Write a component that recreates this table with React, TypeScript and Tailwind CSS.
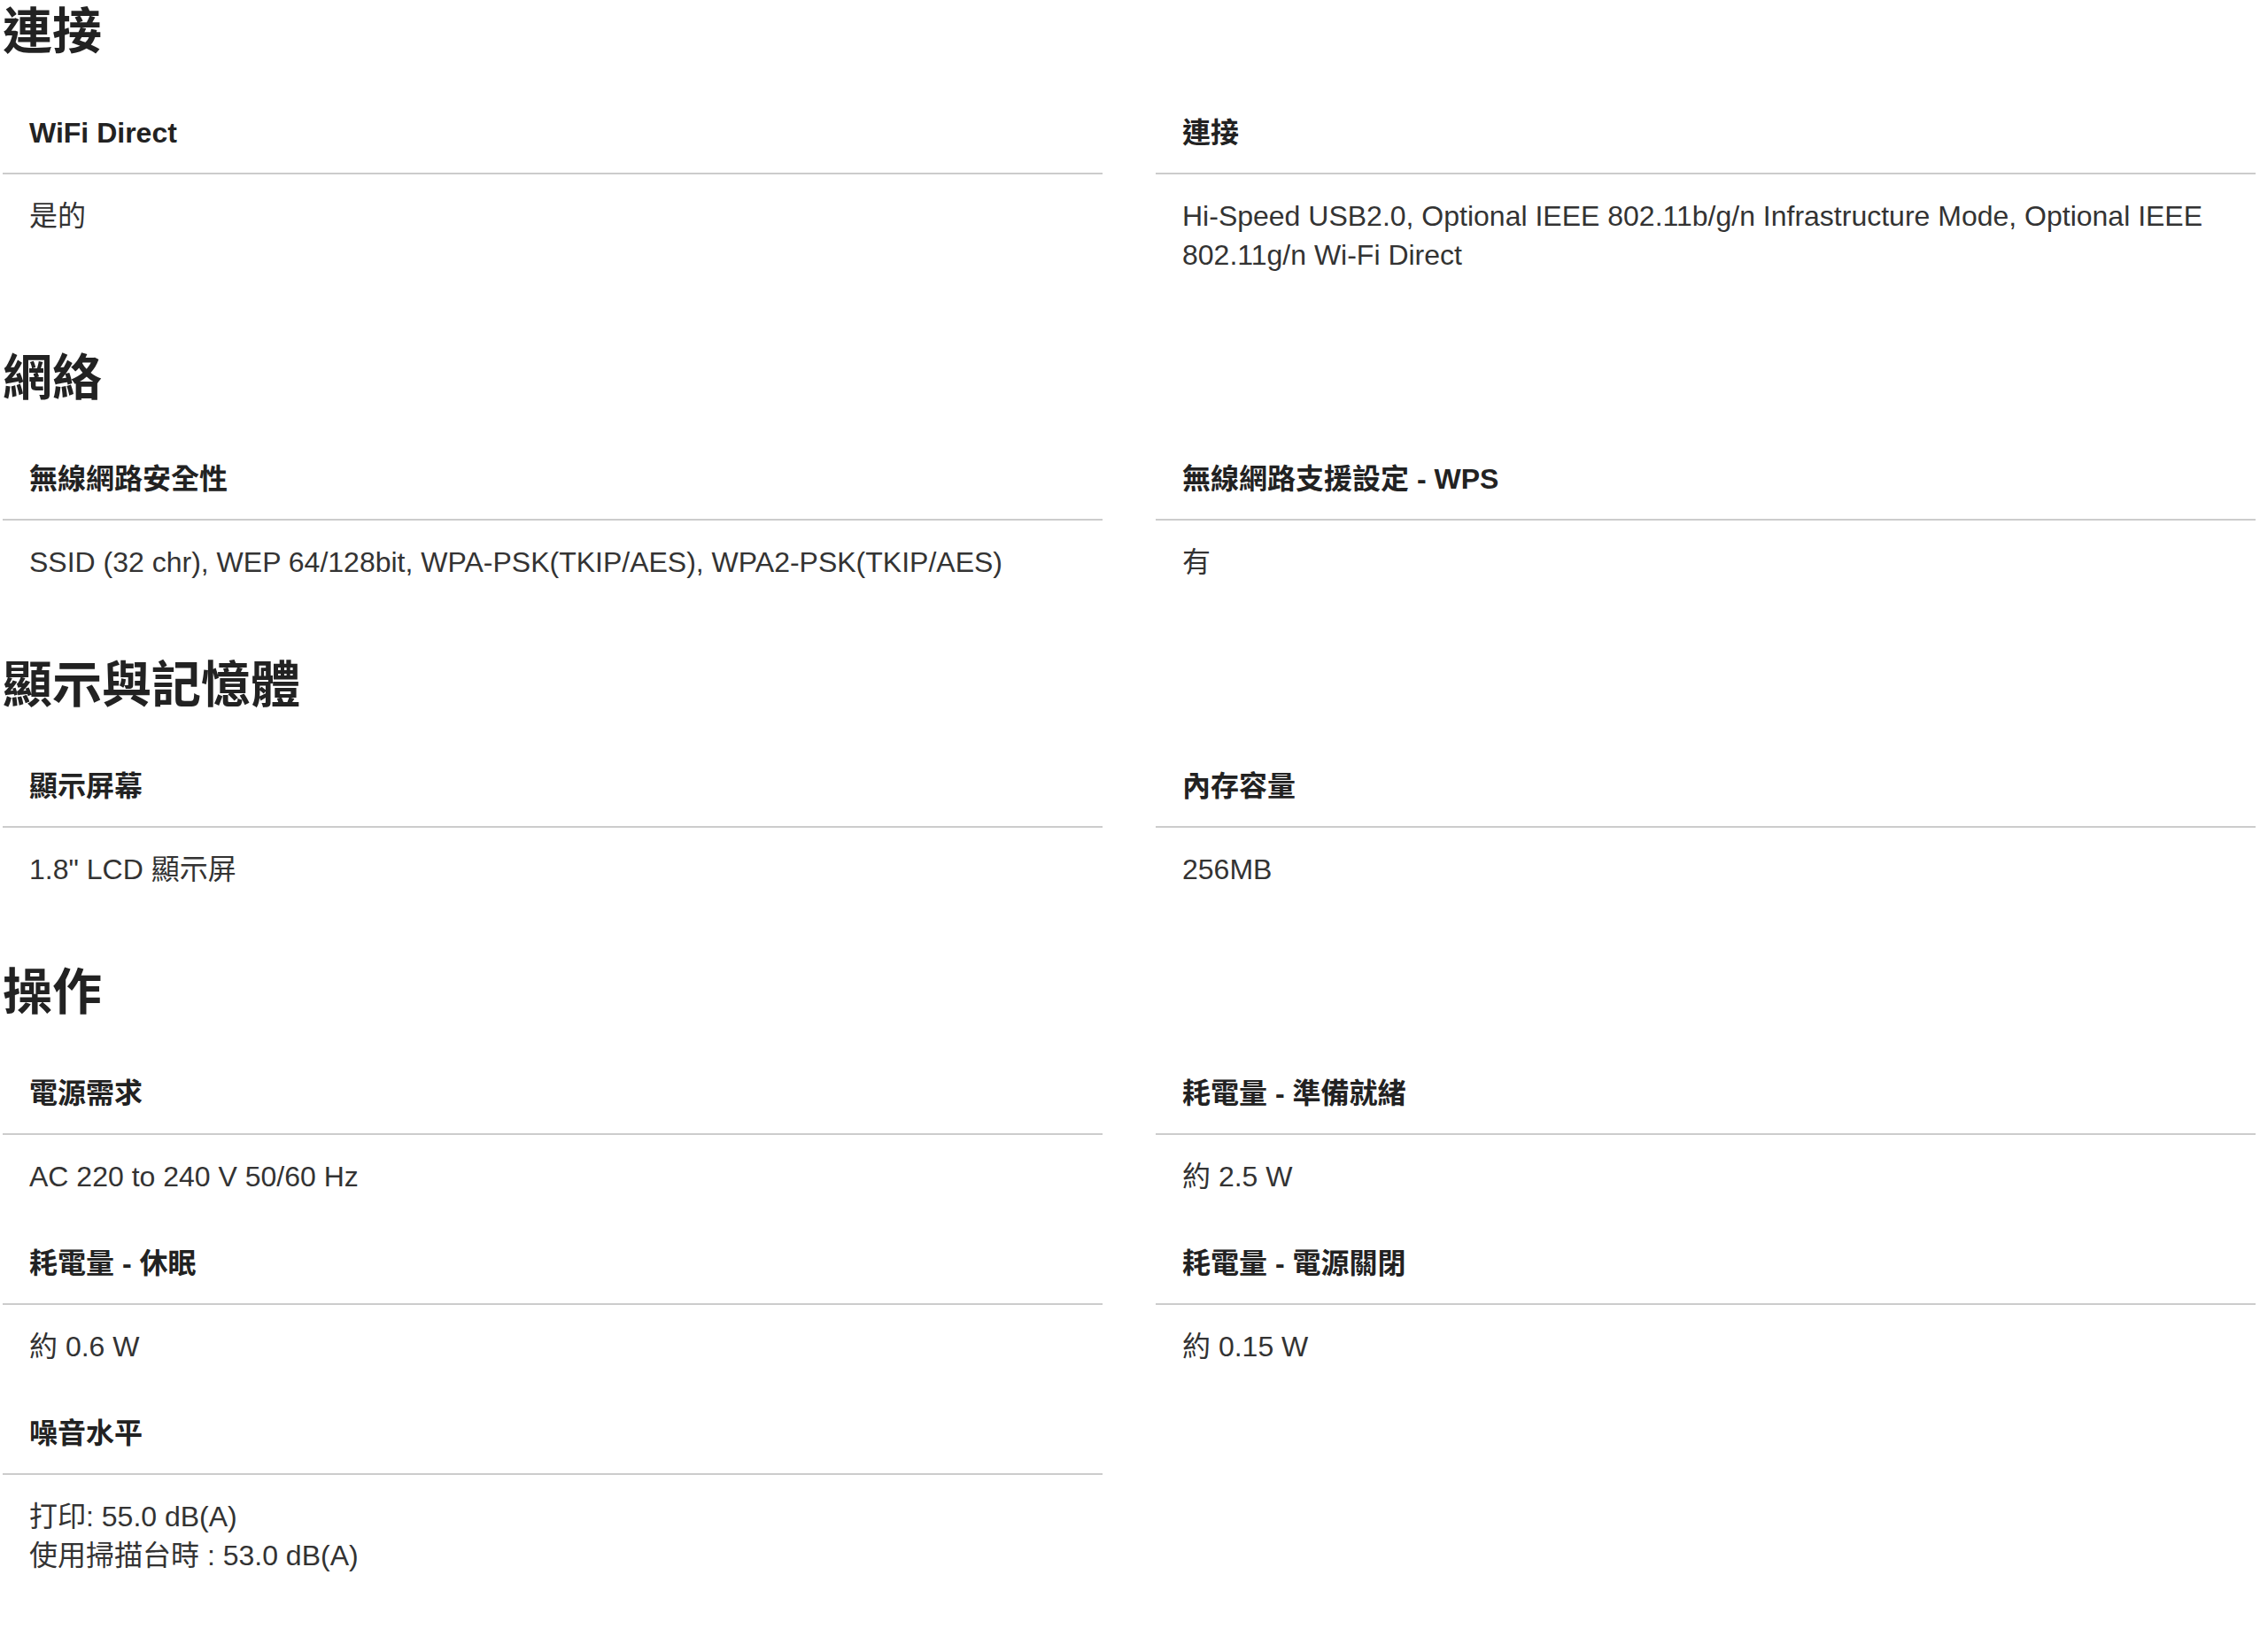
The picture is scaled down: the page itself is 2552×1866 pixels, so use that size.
const sections: { title: string; items: { label: string; value: string[] }[] }[] = [
  {
    title: "連接",
    items: [
      { label: "WiFi Direct", value: ["是的"] },
      {
        label: "連接",
        value: [
          "Hi-Speed USB2.0, Optional IEEE 802.11b/g/n Infrastructure Mode, Optional IEEE 802.11g/n Wi-Fi Direct",
        ],
      },
    ],
  },
  {
    title: "網絡",
    items: [
      {
        label: "無線網路安全性",
        value: ["SSID (32 chr), WEP 64/128bit, WPA-PSK(TKIP/AES), WPA2-PSK(TKIP/AES)"],
      },
      { label: "無線網路支援設定 - WPS", value: ["有"] },
    ],
  },
  {
    title: "顯示與記憶體",
    items: [
      { label: "顯示屏幕", value: ['1.8" LCD 顯示屏'] },
      { label: "內存容量", value: ["256MB"] },
    ],
  },
  {
    title: "操作",
    items: [
      { label: "電源需求", value: ["AC 220 to 240 V 50/60 Hz"] },
      { label: "耗電量 - 準備就緒", value: ["約 2.5 W"] },
      { label: "耗電量 - 休眠", value: ["約 0.6 W"] },
      { label: "耗電量 - 電源關閉", value: ["約 0.15 W"] },
      { label: "噪音水平", value: ["打印: 55.0 dB(A)", "使用掃描台時 : 53.0 dB(A)"] },
    ],
  },
]

function SpecItem({ label, value }: { label: string; value: string[] }) {
  return (
    <div>
      <div className="border-b-2 border-[#cccccc] px-[30px] pt-[24px] pb-[23px] text-[32px] leading-[44px] font-bold text-[#222222]">
        {label}
      </div>
      <div className="px-[30px] pt-[25px] pb-[30px] text-[32px] leading-[44px] text-[#333333]">
        {value.map((line) => (
          <p key={line}>{line}</p>
        ))}
      </div>
    </div>
  )
}

export default function App() {
  return (
    <div className="min-h-screen bg-white pl-[3px] font-['Liberation_Sans','Noto_Sans_CJK_TC',sans-serif]">
      {sections.map((section, i) => (
        <section key={section.title} className={i === 0 ? "" : "mt-[51px]"}>
          <h2 className="mb-[32px] text-[56px] leading-[72px] font-bold text-[#222222]">
            {section.title}
          </h2>
          <div className="grid grid-cols-[1242px_1242px] gap-x-[60px]">
            {section.items.map((item) => (
              <SpecItem key={item.label} label={item.label} value={item.value} />
            ))}
          </div>
        </section>
      ))}
    </div>
  )
}
